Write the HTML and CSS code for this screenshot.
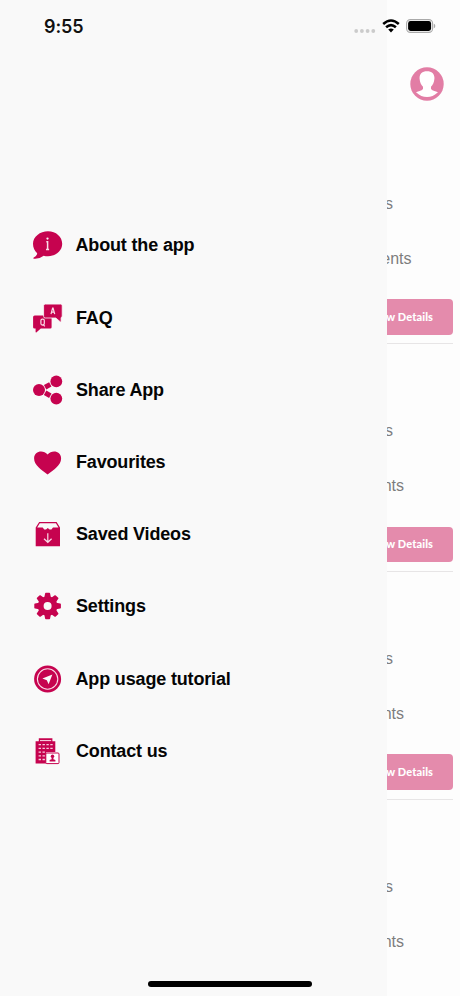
FILE: index.html
```html
<!DOCTYPE html>
<html lang="en">
<head>
<meta charset="utf-8">
<title>Menu</title>
<link rel="stylesheet" href="styles.css">
</head>
<body>
<div class="screen">
  <nav class="drawer">
    <a class="item"><svg class="icon" viewBox="0 0 32 32"><path d="M16 2.2C24 2.2 30.2 7.7 30.2 14.7S24 27.2 16 27.2Q13.5 27.2 11.7 26.7Q7 30.3 1.7 29.7Q1 29.3 1.8 28.6Q5 26.8 5.2 24.2C2.5 21.8 1 18.5 1 14.7C1 7.7 8 2.2 16 2.2Z"/><circle class="cut" cx="15.5" cy="9.6" r="1.15"/><path class="cut-line" d="M14.3 12.8H15.6V20.6M14 20.6H17.1"/></svg><span class="about">About the app</span></a>
    <a class="item"><svg class="icon" viewBox="0 0 32 32"><path d="M2.7 13.5H18.5Q19.6 13.5 19.6 14.8V25.3Q19.6 26.6 18.3 26.6H8.8L4.3 30.5L3.6 30.2V26.6H2.5Q1.1 26.6 1.1 25.2V15Q1.1 13.5 2.7 13.5Z"/><path class="edge" d="M13.2 2.1H28.6Q30.2 2.1 30.2 3.7V14Q30.2 15.6 29.1 15.6V19.6L28.4 19.9L23.8 16H13.2Q11.6 16 11.6 14.4V3.7Q11.6 2.1 13.2 2.1Z"/><path class="cut-line thin" d="M19 12.2L20.6 6.2H21.1L22.7 12.2M19.6 10.2H22.1"/><rect class="cut-line thin" x="8.9" y="17.1" width="3.4" height="6" rx="1.5"/><path class="cut-line thin" d="M10.8 22.2L12.8 24.4"/></svg><span>FAQ</span></a>
    <a class="item"><svg class="icon" viewBox="0 0 32 32"><path class="link" d="M13.1 13.2L18.3 10.4M13.1 18.8L18.3 21.7"/><circle cx="7" cy="16" r="6"/><circle cx="24.3" cy="7.4" r="5.9"/><circle cx="24.3" cy="24.6" r="5.9"/></svg><span>Share App</span></a>
    <a class="item"><svg class="icon" viewBox="0 0 32 32"><path d="M15.6 28.4C9.5 24 2.1 19 2.1 12.4C2.1 4.8 11.4 3.3 15.6 8.6C19.8 3.3 29.1 4.8 29.1 12.4C29.1 19 21.7 24 15.6 28.4Z"/></svg><span>Favourites</span></a>
    <a class="item"><svg class="icon" viewBox="0 0 32 32"><path fill-rule="evenodd" d="M7.2 4H24.6L28 9.4V28.2H3.7V9.4ZM7.8 5.2L5.2 9.6H10.7L12.2 11.5H14L15.8 10L17.6 11.5H19.4L21 9.6H26.5L23.9 5.2Z"/><path class="cut-line thin" d="M15.8 15.2V24M12 20.7L15.8 24.3L19.6 20.7"/></svg><span>Saved Videos</span></a>
    <a class="item"><svg class="icon" viewBox="0 0 32 32"><g transform="translate(15.6 16)"><path fill-rule="evenodd" d="M9.8 0A9.8 9.8 0 1 1-9.8 0A9.8 9.8 0 1 1 9.8 0ZM4 0A4 4 0 1 0-4 0A4 4 0 1 0 4 0Z"/><g id="teeth"><path id="tooth" d="M-3.3-8.5L-2.5-12.6Q-2.4-13.3-1.7-13.3H1.7Q2.4-13.3 2.5-12.6L3.3-8.5Z"/><use href="#tooth" transform="rotate(45)"/><use href="#tooth" transform="rotate(90)"/><use href="#tooth" transform="rotate(135)"/></g><use href="#teeth" transform="rotate(180)"/></g></svg><span>Settings</span></a>
    <a class="item"><svg class="icon" viewBox="0 0 32 32"><circle cx="15.6" cy="16" r="13.5"/><circle class="cut-line ring" cx="15.6" cy="16" r="10.2"/><path class="cut" d="M20.4 11.4L16.6 21.2L14.8 17.3L10.4 15.6Z"/></svg><span class="tutorial">App usage tutorial</span></a>
    <a class="item"><svg class="icon" viewBox="0 0 32 32"><path d="M3.6 6.2H6.8V3.2H20.4V6.2H23.3V17H14.2V28.5H3.6Z"/><path class="cut-line hair" d="M8 5.6H19.2"/><path class="windows" d="M6.6 9.7H21M6.6 13.4H21M6.6 17.1H14M6.6 20.8H14M6.6 24.5H14"/><rect class="badge" x="13.8" y="18" width="13.2" height="10.6" rx="1"/><circle cx="20.5" cy="21.3" r="1.7"/><path d="M19.6 22H21.4V24.2L23.4 25V26.5H17.6V25L19.6 24.2Z"/></svg><span>Contact us</span></a>
  </nav>
  <main class="page">
    <header class="top">
      <svg class="avatar" viewBox="0 0 34 34"><defs><clipPath id="disc"><circle cx="17" cy="15.5" r="14.6"/></clipPath></defs><circle class="avatar-bg" cx="17" cy="17" r="16.7"/><path class="avatar-fg" clip-path="url(#disc)" d="M17 4.2C22.2 4.2 24.8 7.2 24.4 11.7C24.2 15.5 22.8 18 21 19.8V22C22.4 24 26 24.4 29 25.4V34H5V25.4C8 24.4 11.6 24 13 22V19.8C11.2 18 9.8 15.5 9.6 11.7C9.2 7.2 11.8 4.2 17 4.2Z"/></svg>
    </header>
    <section class="card"><p class="line short">s</p><p class="line wide">ents</p><div class="button">w Details</div></section>
    <section class="card"><p class="line short">s</p><p class="line">nts</p><div class="button">w Details</div></section>
    <section class="card"><p class="line short">s</p><p class="line">nts</p><div class="button">w Details</div></section>
    <section class="card last"><p class="line short">s</p><p class="line">nts</p></section>
  </main>
  <div class="status">
    <span class="time">9:55</span>
    <svg class="cell" viewBox="0 0 22 4"><circle cx="2.2" cy="2" r="1.9"/><circle cx="7.9" cy="2" r="1.9"/><circle cx="13.6" cy="2" r="1.9"/><circle cx="19.3" cy="2" r="1.9"/></svg>
    <svg class="wifi" viewBox="0 0 18 14"><path class="wave" d="M1.2 5Q9-2.1 16.8 5M4.1 8.3Q9 3.9 13.9 8.3"/><path d="M6.2 10.5Q9 8.3 11.8 10.5L9 13.4Z"/></svg>
    <svg class="battery" viewBox="0 0 30 14"><rect class="shell" x=".6" y=".6" width="26" height="12.8" rx="3.8"/><rect x="2.1" y="2.1" width="23" height="9.8" rx="2.4"/><path class="cap" d="M27.8 4.8Q29.3 5.3 29.3 7T27.8 9.2Z"/></svg>
  </div>
  <div class="home"></div>
</div>
</body>
</html>
```

FILE: styles.css
```css
* { box-sizing: border-box; }
body { margin: 0; font-family: "Liberation Sans", Arial, sans-serif; }
.screen { position: relative; display: grid; grid-template-columns: 386.5px 1fr; width: 460px; height: 996px; overflow: hidden; background: #fdfdfd; }
.drawer { display: flex; flex-direction: column; padding: 209.3px 0 0 32px; background: #f9f9f9; }
.item { display: flex; align-items: center; gap: 12px; height: 72.2px; color: #050505; font-size: 18px; font-weight: 700; line-height: 22px; letter-spacing: -0.16px; white-space: nowrap; }
.about, .tutorial { margin-left: -0.5px; }
.icon { width: 32px; height: 32px; flex: none; fill: #c6034f; }
.icon .cut { fill: #f9f9f9; }
.icon .cut-line { fill: none; stroke: #f9dce7; stroke-width: 1.5; }
.icon .thin { stroke-width: 1.2; }
.icon .ring { stroke-width: 1.1; }
.icon .hair { stroke-width: 1; }
.icon .edge { stroke: #f9f9f9; stroke-width: 0.8; }
.icon .link { fill: none; stroke: #c6034f; stroke-width: 5; }
.icon .windows { fill: none; stroke: #f6cbdc; stroke-width: 1.3; stroke-dasharray: 2.4 1.5; }
.icon .badge { fill: #fff; stroke: #c6034f; stroke-width: 1; }
.page { overflow: hidden; background: #fdfdfd; }
.top { display: flex; justify-content: flex-end; height: 116.5px; padding: 67.3px 15.8px 0 0; }
.avatar { width: 34px; height: 34px; }
.avatar-bg { fill: #e27da5; }
.avatar-fg { fill: #fff; }
.card { height: 227.7px; margin-right: 7px; padding-top: 77px; border-bottom: 1px solid #e7e5e6; }
.card.last { border: 0; }
.line { display: flex; justify-content: flex-end; width: 17.5px; height: 20px; margin: 0 0 35px; overflow: hidden; color: #7d7d7d; font-size: 16px; line-height: 20px; }
.line.short { width: 6.5px; }
.line.wide { width: 25px; }
.line + .button { margin-top: -4.5px; }
.button { display: flex; align-items: center; justify-content: flex-end; height: 35.5px; padding-right: 20px; overflow: hidden; border-radius: 0 4px 4px 0; background: #e48bac; color: #fff; font: 900 11px/14px Lato, sans-serif; letter-spacing: 0.1px; white-space: nowrap; }
.status { position: absolute; inset: 1px 0 auto; display: flex; align-items: center; height: 50px; padding: 0 24px 0 44px; }
.time { flex: 1; padding-top: 1px; color: #111; font: 600 18px/22px Inter, sans-serif; letter-spacing: -0.1px; }
.cell { width: 22px; height: 4px; margin: 9px 6px 0 0; fill: #cbcbcb; }
.wifi { width: 18px; height: 14px; margin-right: 6.5px; }
.wave { fill: none; stroke: #000; stroke-width: 2.5; }
.battery { width: 30px; height: 14px; }
.shell { fill: none; stroke: #aaa; stroke-width: 1.1; }
.cap { fill: #aaa; }
.home { position: absolute; left: 148px; bottom: 9.5px; width: 164px; height: 5.5px; border-radius: 3px; background: #000; }
```
